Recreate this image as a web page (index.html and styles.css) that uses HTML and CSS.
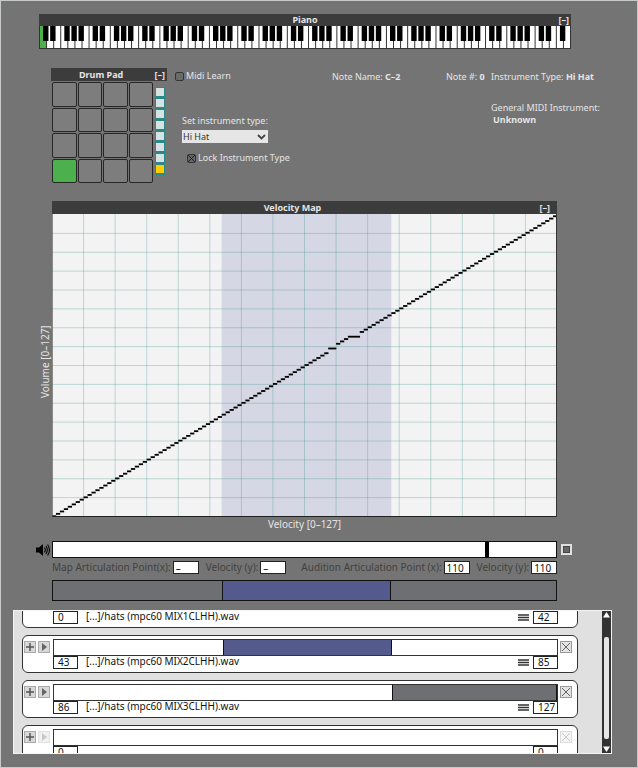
FILE: index.html
```html
<!DOCTYPE html>
<html lang="en">
<head>
<meta charset="utf-8">
<title>Drum Sampler</title>
<link rel="stylesheet" href="styles.css">
</head>
<body>
<main class="window">
  <section class="panel piano">
    <header class="panel-head"><h2>Piano</h2><button class="fold" type="button" aria-label="Collapse piano">[–]</button></header>
    <svg class="keys" id="keys" viewBox="0 0 532 23" preserveAspectRatio="none" role="img" aria-label="Keyboard"></svg>
  </section>

  <section class="top">
    <div class="panel drum">
      <header class="panel-head"><h2>Drum Pad</h2><button class="fold" type="button" aria-label="Collapse drum pad">[–]</button></header>
      <div class="drum-body">
        <div class="pads">
          <button type="button" aria-label="Pad 13"></button><button type="button" aria-label="Pad 14"></button><button type="button" aria-label="Pad 15"></button><button type="button" aria-label="Pad 16"></button>
          <button type="button" aria-label="Pad 9"></button><button type="button" aria-label="Pad 10"></button><button type="button" aria-label="Pad 11"></button><button type="button" aria-label="Pad 12"></button>
          <button type="button" aria-label="Pad 5"></button><button type="button" aria-label="Pad 6"></button><button type="button" aria-label="Pad 7"></button><button type="button" aria-label="Pad 8"></button>
          <button type="button" class="on" aria-label="Pad 1"></button><button type="button" aria-label="Pad 2"></button><button type="button" aria-label="Pad 3"></button><button type="button" aria-label="Pad 4"></button>
        </div>
        <div class="banks">
          <button type="button" aria-label="Bank 8"></button><button type="button" aria-label="Bank 7"></button><button type="button" aria-label="Bank 6"></button><button type="button" aria-label="Bank 5"></button>
          <button type="button" aria-label="Bank 4"></button><button type="button" aria-label="Bank 3"></button><button type="button" aria-label="Bank 2"></button><button type="button" class="on" aria-label="Bank 1"></button>
        </div>
      </div>
    </div>

    <div class="settings">
      <label class="check"><input type="checkbox">Midi Learn</label>
      <div class="type">
        <label for="type">Set instrument type:</label>
        <div class="select">
          <select id="type"><option>Hi Hat</option></select>
          <svg viewBox="0 0 9 6" aria-hidden="true"><path d="M1 1l3.5 3.5L8 1" fill="none" stroke="#444" stroke-width="1.8"/></svg>
        </div>
      </div>
      <label class="check lock"><input type="checkbox" checked>Lock Instrument Type</label>
    </div>

    <div class="info">
      <p>Note Name: <b>C–2</b></p>
      <p>Note #: <b>0</b></p>
      <p>Instrument Type: <b>Hi Hat</b></p>
      <p class="general">General MIDI Instrument:<b>Unknown</b></p>
    </div>
  </section>

  <section class="map">
    <div class="axis-y">Volume [0–127]</div>
    <div class="map-main">
      <header class="panel-head"><h2>Velocity Map</h2><button class="fold" type="button" aria-label="Collapse velocity map">[–]</button></header>
      <svg class="plot" id="plot" viewBox="0 0 505 303" preserveAspectRatio="none" role="img" aria-label="Velocity to volume curve"></svg>
      <div class="axis-x">Velocity [0–127]</div>
    </div>
  </section>

  <section class="audition">
    <svg class="speaker" viewBox="0 0 16 14" aria-hidden="true"><path d="M1 4.500h3l4-3.500v12l-4-3.500h-3z" fill="#000"/><path d="M9.500 4.500q1.500 2.500 0 5M11 3q2.600 4 0 8M12.600 1.500q3.800 5.500 0 11" fill="none" stroke="#000" stroke-width="1.100"/></svg>
    <input class="velocity" type="range" min="0" max="127" value="110" aria-label="Audition velocity">
    <button class="stop" type="button" aria-label="Stop"></button>
  </section>

  <section class="params">
    <label for="mx">Map Articulation Point(x):</label><input id="mx" value="–">
    <label for="my">Velocity (y):</label><input id="my" value="–">
    <label for="ax" class="second">Audition Articulation Point (x):</label><input id="ax" value="110">
    <label for="ay">Velocity (y):</label><input id="ay" value="110">
  </section>

  <div class="zones"><span></span><span class="active"></span><span></span></div>

  <section class="samples">
    <div class="list" id="list"></div>
    <div class="scroll">
      <svg viewBox="0 0 9 8" aria-hidden="true"><path d="M4.500 1L8 6.500H1z" fill="#fff"/></svg>
      <div class="track"><div class="thumb"></div></div>
      <svg viewBox="0 0 9 8" aria-hidden="true"><path d="M4.500 7L8 1.500H1z" fill="#fff"/></svg>
    </div>
  </section>
</main>
<script src="app.js"></script>
</body>
</html>
```

FILE: styles.css
```css
* { box-sizing: border-box; }
body {
  margin: 0;
  background: #747474;
  color: #e4e4e4;
  font: 9px/12px "Noto Sans", "Open Sans", sans-serif;
}
h2, p { margin: 0; font-size: inherit; }
button, input, select { font: inherit; color: inherit; margin: 0; padding: 0; border: 0; border-radius: 0; }
button { background: none; }
input[type="checkbox"], input[type="range"], select { appearance: none; }

.window {
  min-height: 100vh;
  padding: 13px 0;
  border: 1px solid #c6caca;
}

.panel-head {
  display: grid;
  grid-template-columns: 1fr auto 1fr;
  align-items: center;
  height: 13px;
  background: #3c3c3c;
}
.panel-head h2 { grid-column: 2; font-weight: bold; line-height: 12px; }
.fold { justify-self: end; padding-right: 2px; line-height: 12px; font-weight: bold; }

.piano { margin: 0 66px 0 38px; }
.piano .panel-head { height: 12px; }
.keys { display: block; width: 100%; height: 23px; }

.top { display: flex; margin: 19px 36px 0 50px; }
.drum { flex: none; width: 116px; }
.drum .panel-head { grid-template-columns: 28px auto 1fr; }
.drum-body { display: flex; gap: 2px; padding: 1px 0 0 1px; }
.pads { display: grid; grid-template-columns: repeat(4, 1fr); gap: 1px; width: 101px; height: 101px; }
.pads button { border: 1px solid #262626; border-radius: 2px; background: #7d7d7d; }
.pads .on { background: #4cb14c; }
.banks { display: flex; flex-direction: column; padding-top: 5px; }
.banks button { width: 10px; height: 11px; border: 1px solid #2b8888; border-bottom-width: 2px; background: #d8e2e2; }
.banks .on { background: #fc0; }

.settings { flex: none; width: 165px; padding: 2px 0 0 8px; }
.check { display: flex; align-items: center; gap: 2px; line-height: 12px; }
.check input {
  display: grid;
  width: 9px;
  height: 9px;
  border: 1px solid #333;
  border-radius: 2px;
  background: #6a6a6a;
}
.check input:checked { background: linear-gradient(45deg, transparent 44%, #222 44% 56%, transparent 56%), linear-gradient(-45deg, #666 44%, #222 44% 56%, #666 56%); }
.lock { margin: 9px 0 0 12px; }
.type { padding: 33px 0 0 7px; }
.type label { display: block; height: 15px; line-height: 12px; }
.select { position: relative; width: 86px; }
.select select { display: block; width: 100%; height: 13px; padding-left: 1px; background: #e6e6e6; color: #333; line-height: 13px; }
.select svg { position: absolute; right: 2px; top: 4px; width: 9px; height: 6px; pointer-events: none; }

.info {
  flex: 1;
  display: grid;
  grid-template-columns: 114px 45px auto;
  grid-template-rows: 31px auto;
  padding-top: 3px;
  white-space: nowrap;
}
.info .general { grid-column: 3; }
.general b { display: block; padding-left: 2px; }

.map { display: flex; margin: 18px 80px 0 38px; }
.map .panel-head { grid-template-columns: 1fr auto 1fr 24px; }
.map .fold { grid-column: 3 / 5; padding-right: 7px; }
.axis-y { flex: none; width: 13px; writing-mode: vertical-rl; transform: rotate(180deg); text-align: center; font-size: 10px; line-height: 13px; padding-top: 8px; }
.map-main { flex: 1; }
.plot { display: block; width: 100%; height: 303px; }
.axis-x { text-align: center; font-size: 10px; line-height: 14px; }

.audition { display: flex; align-items: center; margin: 10px 65px 0 34px; }
.speaker { flex: none; width: 16px; height: 14px; margin-right: 1px; }
.velocity { flex: 1; min-width: 0; height: 17px; border: 1px solid #111; background: #fff; }
.velocity::-webkit-slider-thumb { appearance: none; width: 4px; height: 15px; background: #000; }
.stop { flex: none; width: 11px; height: 11px; margin-left: 4px; border: 2px solid #e0e0e0; background: #666; box-shadow: inset 0 0 0 1px #444; }

.params { display: flex; align-items: center; margin: 3px 80px 0 51px; color: #424242; font-size: 10px; white-space: nowrap; }
.params label { line-height: 13px; margin-right: 2px; }
.params input { width: 26px; height: 13px; margin-right: 7px; padding: 0 2px; border: 1px solid #222; background: #fff; color: #111; }
.params input:last-child { margin-right: 0; }
.params .second { margin-left: 8px; }

.zones { display: grid; grid-template-columns: 43fr 43fr 42fr; height: 21px; margin: 6px 80px 0 51px; border: 1px solid #111; background: #6e6f72; }
.zones .active { border: solid #111; border-width: 0 1px; background: #545a8b; }

.samples { display: flex; height: 144px; margin: 9px 25px 0 12px; overflow: hidden; border: 1px solid #f4f4f4; background: #e0e0e0; color: #111; font-size: 10px; }
.list { flex: 1; margin: -21px 24px 0 8px; }
.card { display: flex; gap: 3px; height: 38px; margin-bottom: 7px; padding: 3px 5px 0 1px; border: 1px solid #333; border-radius: 6px; background: #fff; }
.tools { display: flex; gap: 2px; padding-top: 2px; }
.icon { display: block; width: 12px; height: 12px; }
.icon svg { display: block; width: 12px; height: 12px; }
.icon:disabled { opacity: .35; }
.body { flex: 1; }
.range { display: grid; height: 17px; border: 1px solid #333; }
.fill { border: 1px solid #111; border-width: 0 1px; }
.fill.blue { background: #545a8b; }
.fill.grey { background: #6e6f72; }
.meta { display: flex; align-items: flex-start; }
.meta input { width: 25px; height: 13px; padding: 0 0 2px 4px; border: 1px solid #222; background: #fff; }
.meta span { flex: 1; padding-left: 8px; line-height: 11px; }
.meta svg { width: 11px; height: 7px; margin: 3px 4px 0 0; }
.remove { margin: 2px 0 0 -1px; }

.scroll { display: flex; flex-direction: column; flex: none; width: 9px; background: #333; }
.scroll svg { width: 9px; height: 8px; }
.track { flex: 1; padding: 18px 2px 6px; }
.thumb { height: 100%; border-radius: 2px; background: #e6e6e6; }
```

FILE: app.js
```js
const rect = (x, y, w, h, fill) => `<rect x="${x}" y="${y}" width="${w}" height="${h}" fill="${fill}"/>`;

// Keyboard: 75 white keys cover MIDI notes 0 to 127.
const keyWidth = 531 / 75;
let keys = rect(0, 0, 532, 23, '#333');
for (let i = 0; i < 75; i++) {
  keys += rect(1 + i * keyWidth, 0, keyWidth - 1, 22, i === 0 ? '#4cb14c' : '#fff');
}
for (let i = 0; i < 74; i++) {
  if (![2, 6].includes(i % 7)) keys += rect((i + 1) * keyWidth - 3, 0, 5.4, 15, '#000');
}
document.getElementById('keys').innerHTML = keys;

// Velocity curve: one short step for each velocity.
const step = 505 / 128;
const flat = { 70: 71, 71: 71, 72: 73, 73: 74, 74: 75, 75: 76, 76: 76, 77: 76 };
let plot = rect(0, 0, 505, 303, '#f3f3f3') + rect(43 * step, 0, 43 * step, 303, '#d5d7e4');
for (let i = 1; i < 16; i++) {
  plot += rect(i * 505 / 16 - 0.5, 0, 1, 303, 'rgba(60,150,140,.3)');
  plot += rect(0, i * 302 / 16, 505, 1, 'rgba(60,150,140,.3)');
}
for (let i = 0; i < 128; i++) {
  const value = flat[i] ?? i;
  plot += rect(i * step, 301.3 - value * 2.362, step + 0.3, 1.8, '#000');
}
plot += rect(0, 302, 505, 1, '#222') + rect(0, 0, 0.6, 303, '#444') + rect(504, 0, 1, 303, '#333');
document.getElementById('plot').innerHTML = plot;

const box = '<rect x=".5" y=".5" width="11" height="11" fill="#d8d8d8" stroke="#aaa"/>';
const plus = `<svg viewBox="0 0 12 12">${box}<path d="M6 2v8M2 6h8" stroke="#555" stroke-width="1.500"/></svg>`;
const play = `<svg viewBox="0 0 12 12">${box}<path d="M4 2l5 4-5 4z" fill="#666"/></svg>`;
const cross = `<svg viewBox="0 0 12 12"><rect x=".5" y=".5" width="11" height="11" fill="#e4e4e4" stroke="#999"/><path d="M2 2l8 8M10 2l-8 8" stroke="#666"/></svg>`;
const menu = '<svg viewBox="0 0 11 7"><path d="M0 1h11M0 3.500h11M0 6h11" stroke="#333" stroke-width="1.400"/></svg>';

const samples = [
  { low: 0, high: 42, name: '[...]/hats (mpc60 MIX1CLHH).wav', tone: 'grey' },
  { low: 43, high: 85, name: '[...]/hats (mpc60 MIX2CLHH).wav', tone: 'blue' },
  { low: 86, high: 127, name: '[...]/hats (mpc60 MIX3CLHH).wav', tone: 'grey' },
  { low: 0, high: 0, name: '', tone: '' }
];
document.getElementById('list').innerHTML = samples.map(s => {
  const off = s.name ? '' : 'disabled';
  const columns = `${s.low}fr ${s.high - s.low + 1}fr ${127 - s.high}fr`;
  return `<article class="card">
    <div class="tools"><button class="icon" type="button" aria-label="Add">${plus}</button><button class="icon" type="button" aria-label="Play" ${off}>${play}</button></div>
    <div class="body">
      <div class="range" style="grid-template-columns:${columns}"><i></i>${s.name ? `<i class="fill ${s.tone}"></i>` : ''}</div>
      <div class="meta"><input value="${s.low}" aria-label="Low velocity"><span>${s.name}</span>${s.name ? menu : ''}<input value="${s.high}" aria-label="High velocity"></div>
    </div>
    <button class="icon remove" type="button" aria-label="Remove" ${off}>${cross}</button>
  </article>`;
}).join('');
```
